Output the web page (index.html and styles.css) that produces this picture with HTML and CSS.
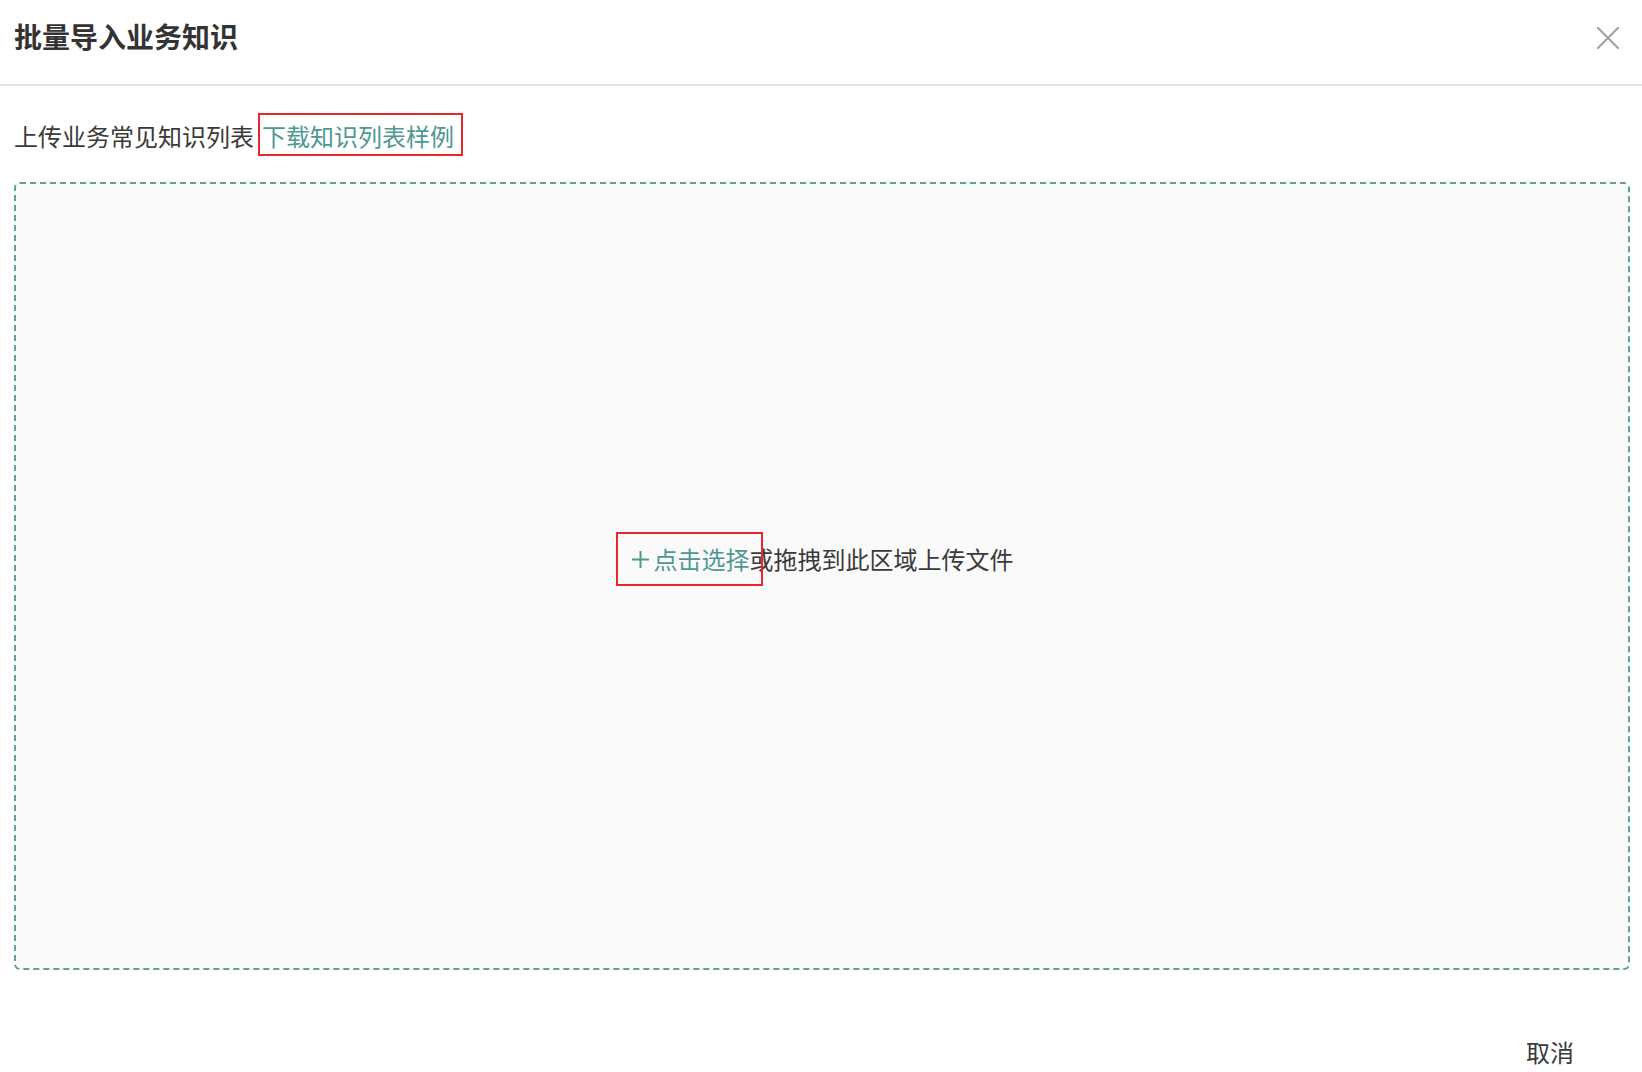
FILE: index.html
```html
<!DOCTYPE html>
<html lang="zh-CN">
  <head>
    <meta charset="UTF-8" />
    <meta name="viewport" content="width=device-width, initial-scale=1.0" />
    <title>批量导入业务知识</title>
    <link rel="stylesheet" href="styles.css">
  </head>
  <body>
    <div class="dialog">
      <div class="dialog-header">
        <h2 class="dialog-title">批量导入业务知识</h2>
        <button class="close" type="button" aria-label="关闭">
          <svg width="24" height="24" viewBox="0 0 24 24">
            <path d="M2 2 L22 22 M22 2 L2 22" stroke="#a3a3a3" stroke-width="2.2" stroke-linecap="round" fill="none" />
          </svg>
        </button>
      </div>

      <div class="dialog-body">
        <div class="tip">
          <span>上传业务常见知识列表</span>
          <a href="#" class="download mark">下载知识列表样例</a>
        </div>

        <div class="upload">
          <div class="upload-text">
            <span class="pick mark-pick">
              <svg class="plus" width="19" height="19" viewBox="0 0 19 19">
                <path d="M9.5 1 V18 M1 9.5 H18" stroke="#4e9893" stroke-width="2" fill="none" />
              </svg>点击选择</span><span>或拖拽到此区域上传文件</span>
          </div>
        </div>
      </div>

      <div class="dialog-footer">
        <button class="cancel" type="button">取消</button>
      </div>
    </div>
  </body>
</html>
```

FILE: styles.css
```css
html {
  box-sizing: border-box;
  font-size: 24px;
}

*,
*:before,
*:after {
  box-sizing: inherit;
}

body,
h2,
p {
  margin: 0;
  padding: 0;
  font-weight: normal;
}

body {
  font-family: "Noto Sans CJK SC", "Noto Sans", sans-serif;
  color: #3a3a3a;
  background: #fff;
}

.dialog-header {
  height: 86px;
  border-bottom: 2px solid #e3e3e5;
  display: flex;
  align-items: flex-start;
  justify-content: space-between;
  padding: 16px 22px 0 14px;

  .dialog-title {
    font-size: 28px;
    font-weight: bold;
    line-height: 40px;
    color: #333;
  }

  .close {
    border: none;
    background: none;
    padding: 0;
    margin-top: 10px;
    cursor: pointer;
    display: flex;
  }
}

.dialog-body {
  padding: 0 12px 0 14px;
}

.tip {
  margin-top: 29px;
  height: 41px;
  display: flex;
  align-items: center;
  line-height: 39px;

  .download {
    color: #4e9893;
    text-decoration: none;
    margin-left: 8px;
  }
}

/* red annotation boxes drawn over the text */
.mark,
.mark-pick {
  position: relative;
}

.mark::after {
  content: "";
  position: absolute;
  top: -3px;
  bottom: -1px;
  left: -4px;
  right: -9px;
  border: 2px solid #e8262b;
}

.mark-pick::after {
  content: "";
  position: absolute;
  top: -13px;
  bottom: -13px;
  left: -15px;
  right: -13px;
  border: 2px solid #e8262b;
}

.upload {
  margin-top: 26px;
  height: 788px;
  border: 2px dashed #5ba29e;
  border-radius: 6px;
  background: #fafafa;
  display: flex;
  align-items: center;
  justify-content: center;
  padding-bottom: 34px;

  .upload-text {
    display: flex;
    align-items: center;
    line-height: 28px;
  }

  .pick {
    color: #4e9893;
    display: inline-flex;
    align-items: center;
  }

  .plus {
    margin: 0 4px 0 0;
  }
}

.dialog-footer {
  display: flex;
  justify-content: flex-end;
  padding: 66px 68px 0 0;

  .cancel {
    border: none;
    background: none;
    padding: 0;
    font-family: inherit;
    font-size: 24px;
    line-height: 32px;
    color: #3a3a3a;
    cursor: pointer;
  }
}
```
